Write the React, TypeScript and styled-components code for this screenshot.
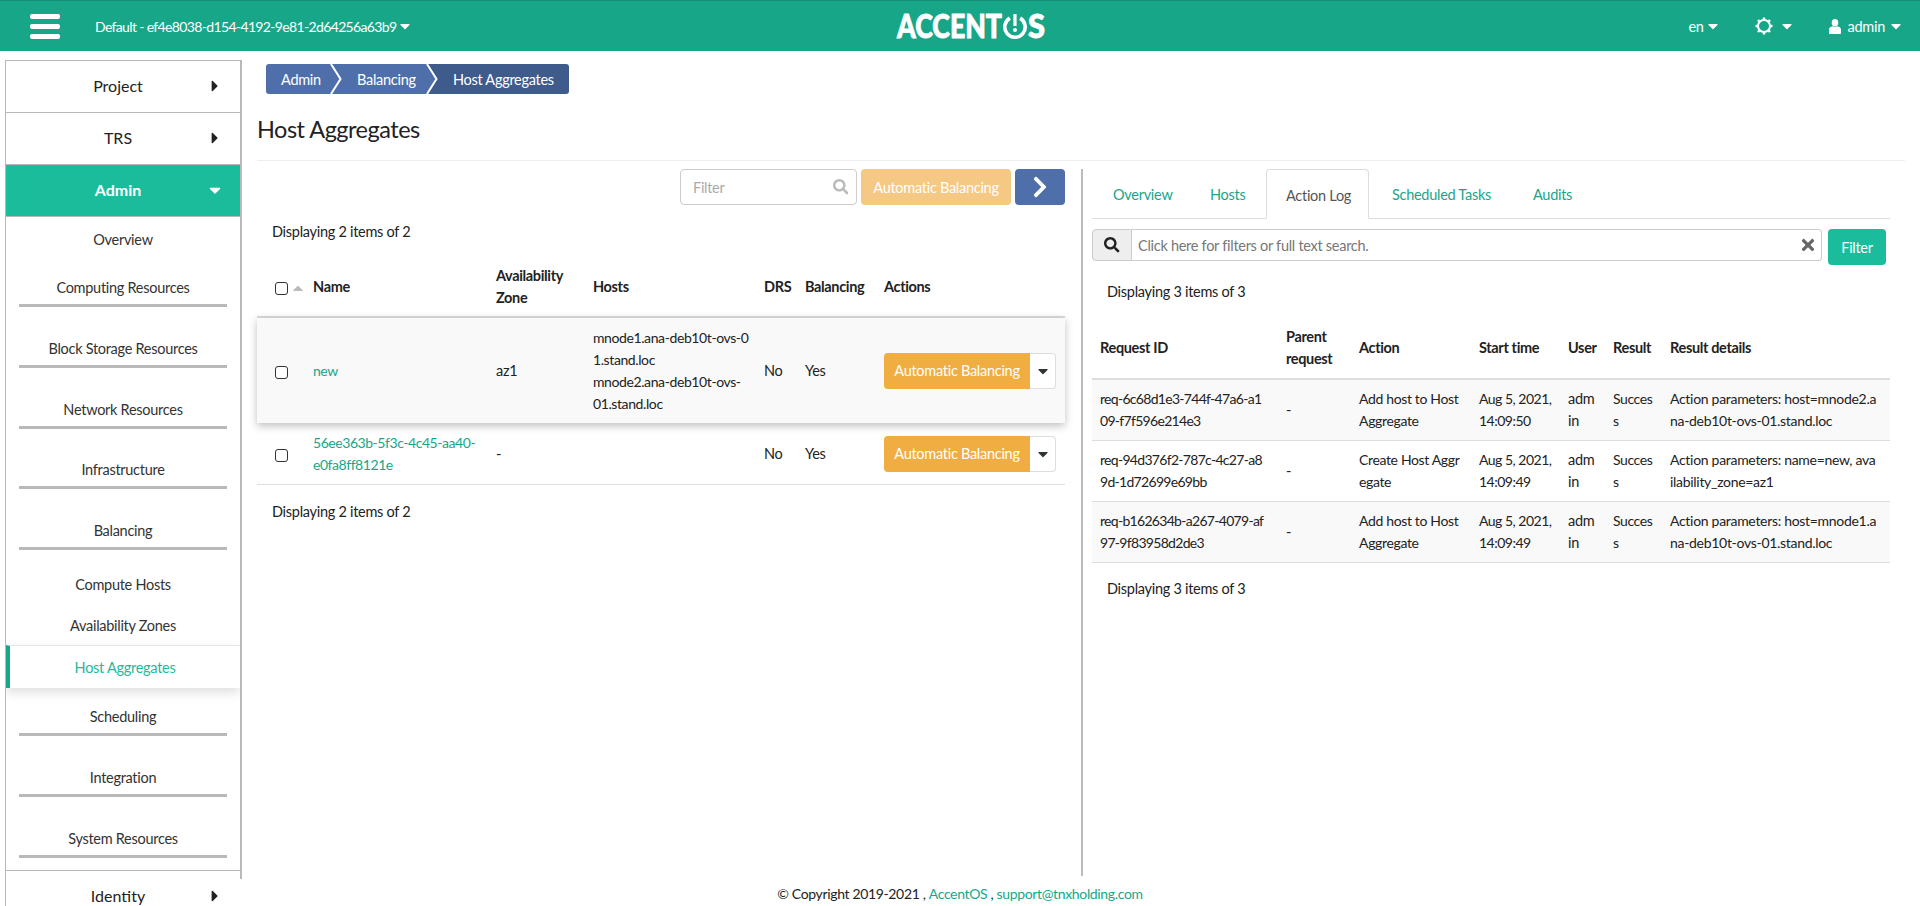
import React from 'react';
import styled, { createGlobalStyle } from 'styled-components';
import { FaSearch, FaChevronRight, FaTimes, FaCaretDown, FaCaretRight, FaCaretUp } from 'react-icons/fa';

const FONT = `"Lato", "Roboto", "Liberation Sans", sans-serif`;
const Global = createGlobalStyle`
  html, body { margin: 0; padding: 0; height: 100%; background: #fff; overflow: hidden; }
  body { font-family: ${FONT}; font-size: 14.5px; letter-spacing: -0.28px; color: #222; }
  * { box-sizing: border-box; }
`;

const Page = styled.div`width: 1920px; height: 906px; position: relative; overflow: hidden; display: flex; flex-direction: column; white-space: nowrap;`;

const Header = styled.header`
  height: 51px; flex: none; background: #18a689; border-top: 1px solid #148f76; color: #fff;
  display: grid; grid-template-columns: 895px 150px 1fr; align-items: center;
`;
const HeaderLeft = styled.div`display: flex; align-items: center; padding-left: 30px;`;
const Burger = styled.div`
  width: 30px; display: flex; flex-direction: column; gap: 5px; margin-right: 35px;
  span { display: block; height: 5px; border-radius: 2px; background: #fff; }
`;
const Project = styled.div`display: flex; align-items: center; font-size: 14px; letter-spacing: -0.65px; gap: 1px;`;
const LogoText = styled.text`font-family: ${FONT}; font-weight: 900; font-size: 33px; fill: #fff; stroke: #fff; stroke-width: 0.9px; letter-spacing: 0;`;
const HeaderRight = styled.div`display: flex; justify-content: flex-end; align-items: center; padding-right: 16px; font-size: 14.5px;`;
const HeadItem = styled.div<{ $gap: number; $ml: number }>`
  display: flex; align-items: center; gap: ${p => p.$gap}px; margin-left: ${p => p.$ml}px;
`;
const HeadLabel = styled.span`margin-left: 4px;`;

const Body = styled.div`flex: 1; display: flex; min-height: 0; padding-top: 9px;`;

const Sidebar = styled.nav`
  width: 237px; margin-left: 5px; flex: none; position: relative;
  border-left: 1px solid #b9b9b9; border-top: 1px solid #b9b9b9; height: 846px; overflow: hidden;
  &::after { content: ''; position: absolute; top: 0; right: 0; width: 2px; height: 818px; background: #b9b9b9; }
`;
const TopItem = styled.div<{ $active?: boolean; $last?: boolean }>`
  height: 52px; display: flex; align-items: center; flex: none;
  padding: 0 16px 2px 59px; margin-right: 2px; letter-spacing: 0;
  font-size: 16px; font-weight: ${p => (p.$active ? 700 : 400)};
  color: ${p => (p.$active ? '#fff' : '#222')};
  background: ${p => (p.$active ? '#1abc9c' : '#fff')};
  border-bottom: ${p => (p.$last ? 'none' : '1px solid #b9b9b9')};
  border-top: ${p => (p.$last ? '1px solid #b9b9b9' : 'none')};
  margin-top: ${p => (p.$last ? 12 : 0)}px;
  span { width: 106px; text-align: center; }
  svg { margin-left: auto; font-size: 18px; }
`;
const SubLink = styled.div<{ $h: number; $pt?: number }>`
  height: ${p => p.$h}px; padding-top: ${p => p.$pt ?? 0}px; display: flex; align-items: center; justify-content: center; color: #333; margin-right: 2px;
`;
const SubGroup = styled.div<{ $h: number; $pt: number }>`
  margin: 0 15px 0 13px; height: ${p => p.$h}px; padding-top: ${p => p.$pt}px; border-bottom: 3px solid #b9b9b9;
  text-align: center; color: #333; line-height: 22px;
`;
const SubActive = styled.div`
  height: 43px; margin-right: 2px; display: flex; align-items: center; justify-content: center;
  border-top: 1px solid #e4e4e4; border-left: 4px solid #18a689; color: #1abc9c; background: #fff;
  box-shadow: 0 5px 10px rgba(0,0,0,.12); position: relative;
`;

const Main = styled.main`flex: 1; min-width: 0; padding: 4px 15px 0 15px; display: flex; flex-direction: column;`;
const Crumbs = styled.div`display: flex; margin-left: 9px; height: 30px; width: max-content; border-radius: 3px; overflow: hidden;`;
const Crumb = styled.div<{ $last?: boolean; $pl: number; $w: number }>`
  width: ${p => p.$w}px; padding-left: ${p => p.$pl}px; position: relative; display: flex; align-items: center;
  color: #fff; background: ${p => (p.$last ? '#3f5b8b' : '#4f6fab')};
  svg { position: absolute; left: ${p => p.$w - 2}px; top: 0; z-index: 1; }
`;
const Title = styled.h1`
  margin: 0; height: 67px; padding-top: 19px; border-bottom: 1px solid #eee; font-size: 23.5px; letter-spacing: -0.5px; font-weight: 400; line-height: 32px; color: #222;
`;
const Split = styled.div`display: flex; padding-top: 8px; flex: 1; min-height: 0;`;
const LeftPane = styled.section`width: 808px; flex: none;`;
const Divider = styled.div`width: 2px; height: 707px; background: #bbb; margin: 0 9px 0 16px; flex: none;`;
const RightPane = styled.section`width: 798px; flex: none;`;

const Toolbar = styled.div`display: flex; justify-content: flex-end; gap: 4px; height: 36px;`;
const FilterBox = styled.div`
  width: 177px; border: 1px solid #ccc; border-radius: 4px; padding: 0 8px 0 12px; display: flex; align-items: center; justify-content: space-between;
  color: #aaa; svg { color: #bbb; font-size: 15.5px; }
`;
const Btn = styled.div<{ $bg: string; $w: number }>`
  width: ${p => p.$w}px; background: ${p => p.$bg}; color: #fff; border-radius: 4px; display: flex; align-items: center; justify-content: center;
`;
const Count = styled.div<{ $ml: number; $h: number }>`
  margin-left: ${p => p.$ml}px; height: ${p => p.$h}px; display: flex; align-items: center; color: #222;
`;

const Table = styled.table`
  border-collapse: collapse; table-layout: fixed; width: 100%; line-height: 22px; color: #222;
  th { text-align: left; font-weight: 700; letter-spacing: -0.35px; padding: 1px 8px 0; vertical-align: middle; border-bottom: 2px solid #ddd; }
  td { padding: 1px 8px 0; vertical-align: middle; }
`;
const HeadRow = styled.tr<{ $h: number }>`height: ${p => p.$h}px;`;
const CheckCell = styled.td`&& { padding-left: 18px; }`;
const CheckHead = styled.th`&& { padding-left: 18px; }`;
const WrapHead = styled.th`&& { white-space: normal; }`;
const Tight = styled.span<{ $ls: number }>`font-size: 14px; letter-spacing: ${p => p.$ls}px;`;
const HostRow = styled.tr<{ $raised?: boolean; $h: number }>`
  height: ${p => p.$h}px; background: ${p => (p.$raised ? '#f9f9f9' : 'transparent')};
  box-shadow: ${p => (p.$raised ? '0 3px 8px rgba(0,0,0,.25)' : 'none')};
  border-bottom: ${p => (p.$raised ? 'none' : '1px solid #ddd')};
  position: relative;
`;
const LogRow = styled.tr<{ $alt?: boolean }>`
  height: 61px; background: ${p => (p.$alt ? '#f9f9f9' : '#fff')}; border-bottom: 1px solid #ddd;
`;
const Check = styled.span`display: inline-block; width: 13px; height: 13px; border: 1.5px solid #333; border-radius: 3px; background: #fff; vertical-align: middle;`;
const SortCaret = styled(FaCaretUp)`color: #bbb; font-size: 16px; vertical-align: middle; margin-left: 2px;`;
const NameLink = styled(Tight)`color: #18a689;`;
const SplitBtn = styled.div`display: flex; height: 36px; width: 172px;`;
const Act = styled.div`
  width: 146px; background: #f0ad41; color: #fff; border-radius: 4px 0 0 4px; display: flex; align-items: center; justify-content: center;
`;
const ActCaret = styled.div`
  width: 26px; border: 1px solid #ddd; border-left: none; background: #fff; border-radius: 0 4px 4px 0; display: flex; align-items: center; justify-content: center; color: #333; font-size: 16px;
`;

const Tabs = styled.div`display: flex; height: 50px; border-bottom: 1px solid #ddd; align-items: stretch;`;
const Tab = styled.div<{ $active?: boolean; $w: number; $pl: number }>`
  width: ${p => p.$w}px; padding-left: ${p => p.$pl}px; padding-top: 2px; display: flex; align-items: center;
  color: ${p => (p.$active ? '#555' : '#18a689')};
  ${p => p.$active ? 'border: 1px solid #ddd; border-bottom: 1px solid #fff; border-radius: 4px 4px 0 0; height: 50px;' : ''}
`;
const SearchRow = styled.div`display: flex; margin-top: 10px; height: 36px; align-items: flex-start;`;
const Addon = styled.div`
  width: 40px; height: 32px; background: #eee; border: 1px solid #ccc; border-radius: 4px 0 0 4px; display: flex; align-items: center; justify-content: center; color: #222; font-size: 15.5px;
`;
const SearchInput = styled.div`
  width: 690px; height: 32px; border: 1px solid #ccc; border-left: none; border-radius: 0 4px 4px 0; padding: 0 4px 0 6px; display: flex; align-items: center; justify-content: space-between; color: #777;
  svg { color: #666; font-size: 18px; }
`;
const FilterBtn = styled.div`
  margin-left: 6px; width: 58px; height: 36px; background: #1abc9c; color: #fff; border-radius: 4px; display: flex; align-items: center; justify-content: center;
`;
const Footer = styled.footer`
  position: absolute; left: 242px; right: 0; bottom: 0; height: 28px; padding: 3px 242px 0 0; background: #fff; display: flex; align-items: center; justify-content: center; font-size: 14px; letter-spacing: -0.35px; color: #222;
  a { color: #18a689; }
`;

const hosts = [
  { n: 'new', z: 'az1', h: ['mnode1.ana-deb10t-ovs-0', '1.stand.loc', 'mnode2.ana-deb10t-ovs-', '01.stand.loc'], raised: true, rh: 106 },
  { n: ['56ee363b-5f3c-4c45-aa40-', 'e0fa8ff8121e'], z: '-', h: [], raised: false, rh: 61 },
];
const logs = [
  { id: ['req-6c68d1e3-744f-47a6-a1', '09-f7f596e214e3'], a: ['Add host to Host', 'Aggregate'], t: '14:09:50', d: ['Action parameters: host=mnode2.a', 'na-deb10t-ovs-01.stand.loc'] },
  { id: ['req-94d376f2-787c-4c27-a8', '9d-1d72699e69bb'], a: ['Create Host Aggr', 'egate'], t: '14:09:49', d: ['Action parameters: name=new, ava', 'ilability_zone=az1'] },
  { id: ['req-b162634b-a267-4079-af', '97-9f83958d2de3'], a: ['Add host to Host', 'Aggregate'], t: '14:09:49', d: ['Action parameters: host=mnode1.a', 'na-deb10t-ovs-01.stand.loc'] },
];
const Lines = ({ l }: { l: string[] }) => <>{l.map((x, i) => <React.Fragment key={i}>{i > 0 && <br />}{x}</React.Fragment>)}</>;

const Gear = () => (
  <svg width="18" height="18" viewBox="0 0 18 18" fill="none" stroke="#fff">
    <circle cx="9" cy="9" r="6" strokeWidth="2" />
    {[0, 45, 90, 135, 180, 225, 270, 315].map(a => (
      <line key={a} x1="9" y1="0.5" x2="9" y2="3" strokeWidth="2.4" transform={`rotate(${a} 9 9)`} />
    ))}
  </svg>
);
const UserIcon = () => (
  <svg width="12" height="15" viewBox="0 0 12 15" fill="#fff">
    <ellipse cx="6" cy="3.8" rx="3.3" ry="3.8" />
    <path d="M0 14 V10.5 C0 8.5 2 7.6 3.6 7.2 C4.5 8 7.5 8 8.4 7.2 C10 7.6 12 8.5 12 10.5 V14 C12 14.6 11.6 15 11 15 H1 C0.4 15 0 14.6 0 14 Z" />
  </svg>
);
const LogoMark = () => (
  <svg width="150" height="26" viewBox="0 0 150 26">
    <LogoText x="2" y="24.5" textLength="105" lengthAdjust="spacingAndGlyphs">ACCENT</LogoText>
    <path d="M114.9 5.17 A 10.2 10.2 0 1 0 125.1 5.17" fill="none" stroke="#fff" strokeWidth="3.6" />
    <rect x="118.4" y="1" width="3.2" height="12" fill="#fff" />
    <circle cx="120" cy="17" r="2" fill="#fff" />
    <LogoText x="133" y="24.5" textLength="17" lengthAdjust="spacingAndGlyphs">S</LogoText>
  </svg>
);
const Chevron = ({ fill }: { fill: string }) => (
  <svg width="12" height="30" viewBox="0 0 12 30"><path d="M0 0 L10 15 L0 30 Z" fill={fill} /><path d="M1 0 L10.5 15 L1 30" fill="none" stroke="#fff" strokeWidth="2" /></svg>
);

export default function App() {
  return (
    <Page>
      <Global />
      <Header>
        <HeaderLeft>
          <Burger><span /><span /><span /></Burger>
          <Project>Default - ef4e8038-d154-4192-9e81-2d64256a63b9<FaCaretDown size={16} /></Project>
        </HeaderLeft>
        <LogoMark />
        <HeaderRight>
          <HeadItem $gap={1} $ml={0}>en<FaCaretDown size={16} /></HeadItem>
          <HeadItem $gap={6} $ml={34}><Gear /><FaCaretDown size={16} /></HeadItem>
          <HeadItem $gap={3} $ml={34}><UserIcon /><HeadLabel>admin</HeadLabel><FaCaretDown size={16} /></HeadItem>
        </HeaderRight>
      </Header>
      <Body>
        <Sidebar>
          <TopItem><span>Project</span><FaCaretRight /></TopItem>
          <TopItem><span>TRS</span><FaCaretRight /></TopItem>
          <TopItem $active><span>Admin</span><FaCaretDown /></TopItem>
          <SubLink $h={44}>Overview</SubLink>
          <SubGroup $h={46} $pt={16}>Computing Resources</SubGroup>
          <SubGroup $h={61} $pt={31}>Block Storage Resources</SubGroup>
          <SubGroup $h={61} $pt={31}>Network Resources</SubGroup>
          <SubGroup $h={60} $pt={30}>Infrastructure</SubGroup>
          <SubGroup $h={61} $pt={31}>Balancing</SubGroup>
          <SubLink $h={55} $pt={13}>Compute Hosts</SubLink>
          <SubLink $h={40}>Availability Zones</SubLink>
          <SubActive>Host Aggregates</SubActive>
          <SubGroup $h={48} $pt={18}>Scheduling</SubGroup>
          <SubGroup $h={61} $pt={31}>Integration</SubGroup>
          <SubGroup $h={61} $pt={31}>System Resources</SubGroup>
          <TopItem $last><span>Identity</span><FaCaretRight /></TopItem>
        </Sidebar>
        <Main>
          <Crumbs>
            <Crumb $w={66} $pl={15}>Admin<Chevron fill="#4f6fab" /></Crumb>
            <Crumb $w={96} $pl={25}>Balancing<Chevron fill="#4f6fab" /></Crumb>
            <Crumb $w={141} $pl={25} $last>Host Aggregates</Crumb>
          </Crumbs>
          <Title>Host Aggregates</Title>
          <Split>
            <LeftPane>
              <Toolbar>
                <FilterBox>Filter<FaSearch /></FilterBox>
                <Btn $bg="#f5c884" $w={150}>Automatic Balancing</Btn>
                <Btn $bg="#4f6fab" $w={50}><FaChevronRight size={24} /></Btn>
              </Toolbar>
              <Count $ml={15} $h={52}>Displaying 2 items of 2</Count>
              <Table>
                <colgroup>
                  <col style={{ width: 48 }} /><col style={{ width: 183 }} /><col style={{ width: 97 }} /><col style={{ width: 171 }} /><col style={{ width: 41 }} /><col style={{ width: 79 }} /><col />
                </colgroup>
                <thead>
                  <HeadRow $h={60}>
                    <CheckHead><Check /><SortCaret /></CheckHead>
                    <th>Name</th><WrapHead>Availability Zone</WrapHead><th>Hosts</th><th>DRS</th><th>Balancing</th><th>Actions</th>
                  </HeadRow>
                </thead>
                <tbody>
                  {hosts.map((r, i) => (
                    <HostRow key={i} $raised={r.raised} $h={r.rh}>
                      <CheckCell><Check /></CheckCell>
                      <td><NameLink $ls={-0.45}>{Array.isArray(r.n) ? <Lines l={r.n} /> : r.n}</NameLink></td>
                      <td>{r.z}</td>
                      <td><Tight $ls={-0.4}><Lines l={r.h} /></Tight></td>
                      <td>No</td>
                      <td>Yes</td>
                      <td><SplitBtn><Act>Automatic Balancing</Act><ActCaret><FaCaretDown /></ActCaret></SplitBtn></td>
                    </HostRow>
                  ))}
                </tbody>
              </Table>
              <Count $ml={15} $h={54}>Displaying 2 items of 2</Count>
            </LeftPane>
            <Divider />
            <RightPane>
              <Tabs>
                <Tab $w={118} $pl={21}>Overview</Tab>
                <Tab $w={56} $pl={0}>Hosts</Tab>
                <Tab $active $w={103} $pl={19}>Action Log</Tab>
                <Tab $w={164} $pl={23}>Scheduled Tasks</Tab>
                <Tab $w={60} $pl={0}>Audits</Tab>
              </Tabs>
              <SearchRow>
                <Addon><FaSearch /></Addon>
                <SearchInput>Click here for filters or full text search.<FaTimes /></SearchInput>
                <FilterBtn>Filter</FilterBtn>
              </SearchRow>
              <Count $ml={15} $h={52}>Displaying 3 items of 3</Count>
              <Table>
                <colgroup>
                  <col style={{ width: 186 }} /><col style={{ width: 73 }} /><col style={{ width: 120 }} /><col style={{ width: 89 }} /><col style={{ width: 45 }} /><col style={{ width: 57 }} /><col />
                </colgroup>
                <thead>
                  <HeadRow $h={62}>
                    <th>Request ID</th><WrapHead>Parent request</WrapHead><th>Action</th><th>Start time</th><th>User</th><th>Result</th><th>Result details</th>
                  </HeadRow>
                </thead>
                <tbody>
                  {logs.map((r, i) => (
                    <LogRow key={i} $alt={i !== 1}>
                      <td><Tight $ls={-0.7}><Lines l={r.id} /></Tight></td>
                      <td>-</td>
                      <td><Tight $ls={-0.35}><Lines l={r.a} /></Tight></td>
                      <td><Tight $ls={-0.5}>Aug 5, 2021,<br />{r.t}</Tight></td>
                      <td>adm<br />in</td>
                      <td><Tight $ls={-0.4}>Succes<br />s</Tight></td>
                      <td><Tight $ls={-0.3}><Lines l={r.d} /></Tight></td>
                    </LogRow>
                  ))}
                </tbody>
              </Table>
              <Count $ml={15} $h={52}>Displaying 3 items of 3</Count>
            </RightPane>
          </Split>
        </Main>
      </Body>
      <Footer>© Copyright 2019-2021 ,&nbsp;<a>AccentOS</a>&nbsp;,&nbsp;<a>support@tnxholding.com</a></Footer>
    </Page>
  );
}
